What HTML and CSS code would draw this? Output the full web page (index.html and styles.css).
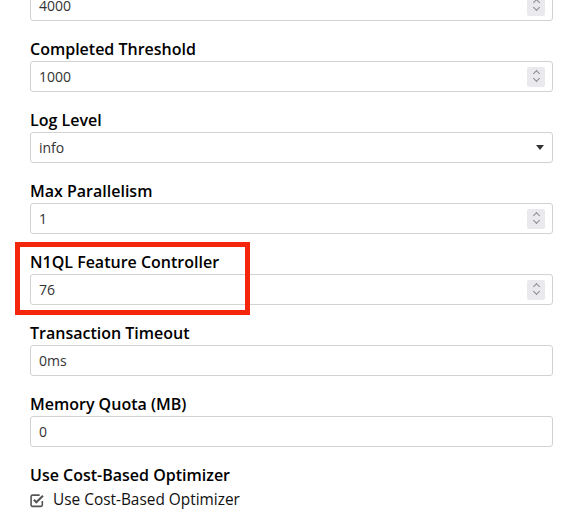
FILE: index.html
```html
<!DOCTYPE html>
<html lang="en">
<head>
  <meta charset="UTF-8">
  <meta name="viewport" content="width=device-width, initial-scale=1.0">
  <title>Query Settings</title>
  <link rel="stylesheet" href="styles.css">
</head>
<body>
  <form class="settings">
    <div class="field">
      <label class="field-label" for="completedLimit">Completed Limit</label>
      <div class="control">
        <input type="text" id="completedLimit" value="4000">
        <span class="spinner"><i class="up"></i><i class="down"></i></span>
      </div>
    </div>

    <div class="field">
      <label class="field-label" for="completedThreshold">Completed Threshold</label>
      <div class="control">
        <input type="text" id="completedThreshold" value="1000">
        <span class="spinner"><i class="up"></i><i class="down"></i></span>
      </div>
    </div>

    <div class="field">
      <label class="field-label" for="logLevel">Log Level</label>
      <div class="control">
        <input type="text" id="logLevel" value="info" readonly>
        <span class="caret"></span>
      </div>
    </div>

    <div class="field">
      <label class="field-label" for="maxParallelism">Max Parallelism</label>
      <div class="control">
        <input type="text" id="maxParallelism" value="1">
        <span class="spinner"><i class="up"></i><i class="down"></i></span>
      </div>
    </div>

    <div class="field">
      <div class="highlight"></div>
      <label class="field-label" for="n1qlFeatCtrl">N1QL Feature Controller</label>
      <div class="control">
        <input type="text" id="n1qlFeatCtrl" value="76">
        <span class="spinner"><i class="up"></i><i class="down"></i></span>
      </div>
    </div>

    <div class="field">
      <label class="field-label" for="txTimeout">Transaction Timeout</label>
      <div class="control">
        <input type="text" id="txTimeout" value="0ms">
      </div>
    </div>

    <div class="field">
      <label class="field-label" for="memoryQuota">Memory Quota (MB)</label>
      <div class="control">
        <input type="text" id="memoryQuota" value="0">
      </div>
    </div>

    <div class="field">
      <div class="field-label">Use Cost-Based Optimizer</div>
      <label class="check-row">
        <svg class="check-icon" viewBox="0 0 14 14" width="15" height="15">
          <path d="M11.5 7.5v3.5a1.5 1.5 0 0 1-1.5 1.5H2.5A1.5 1.5 0 0 1 1 11V3.5A1.5 1.5 0 0 1 2.5 2H9" fill="none" stroke="#555" stroke-width="1.5"/>
          <path d="M3.6 6.4l2.3 2.3 6.2-6.2" fill="none" stroke="#555" stroke-width="2"/>
        </svg>
        <span>Use Cost-Based Optimizer</span>
      </label>
    </div>
  </form>
</body>
</html>
```

FILE: styles.css
```css
* {
    margin: 0;
    padding: 0;
    box-sizing: border-box;
}

body {
    font-family: "Open Sans", "Noto Sans", Arial, sans-serif;
    color: #000;
    background: #fff;
    overflow: hidden;
}

.settings {
    display: flex;
    flex-direction: column;
    padding: 0 23px 0 30px;
    margin-top: -33px;
}

.field {
    position: relative;
    margin-bottom: 17px;
}

.field-label {
    display: block;
    font-size: 16px;
    font-weight: 600;
    line-height: 20px;
    padding-top: 1px;
    margin-bottom: 2px;
}

.control {
    display: flex;
    align-items: center;
    height: 31px;
    border: 1px solid #d2d2d2;
    border-radius: 3px;
    background: #fff;
    padding-right: 7px;
}

.control input {
    flex: 1;
    min-width: 0;
    height: 100%;
    border: none;
    outline: none;
    background: transparent;
    padding: 0 8px;
    font-family: inherit;
    font-size: 14px;
    color: #333;
}

/* number stepper */
.spinner {
    display: flex;
    flex-direction: column;
    align-items: center;
    justify-content: center;
    gap: 3px;
    width: 18px;
    height: 20px;
    background: #e9e9ee;
    border-radius: 2px;
}

.spinner i {
    display: block;
    width: 5px;
    height: 5px;
    border-left: 1px solid #8a8a90;
    border-top: 1px solid #8a8a90;
}

.spinner .up {
    transform: translateY(1px) rotate(45deg);
}

.spinner .down {
    transform: translateY(-2px) rotate(225deg);
}

/* select arrow */
.caret {
    width: 0;
    height: 0;
    margin-right: 1px;
    border-left: 4px solid transparent;
    border-right: 4px solid transparent;
    border-top: 5px solid #333;
}

.highlight {
    position: absolute;
    left: -15px;
    top: -9px;
    width: 235px;
    height: 73px;
    border: 5px solid #f4260c;
    pointer-events: none;
    z-index: 2;
}

.check-row {
    display: flex;
    align-items: center;
    gap: 8px;
    padding-top: 3px;
    font-size: 15.4px;
    line-height: 20px;
    color: #111;
}

.check-icon {
    flex: none;
}
```
